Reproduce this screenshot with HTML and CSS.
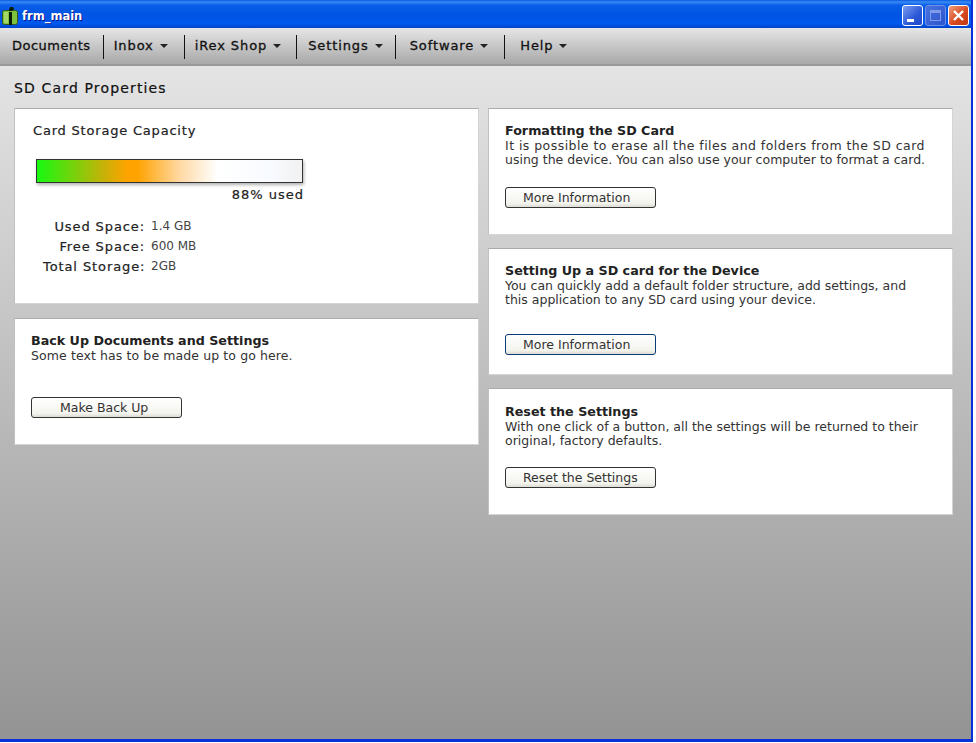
FILE: index.html
```html
<!DOCTYPE html>
<html lang="en">
<head>
    <meta charset="UTF-8">
    <title>frm_main</title>
    <link rel="stylesheet" href="styles.css">
</head>
<body>
<div class="window">
    <div class="titlebar">
        <svg class="app-icon" width="16" height="18" viewBox="0 0 16 18">
            <rect x="0.5" y="3.5" width="15" height="14" rx="2" fill="#7fc23e" stroke="#33591a"/>
            <rect x="2" y="5" width="4" height="11" fill="#a4d867"/>
            <rect x="7" y="5" width="3" height="13" fill="#0c1a08"/>
            <path d="M7 3l1-3h3l1 2-2 2H7z" fill="#0c1a08"/>
        </svg>
        <span class="title">frm_main</span>
        <div class="controls">
            <button class="ctl ctl-min"><span class="glyph-min"></span></button>
            <button class="ctl ctl-max"><span class="glyph-max"></span></button>
            <button class="ctl ctl-close">
                <svg width="13" height="13" viewBox="0 0 13 13"><path d="M2 2l9 9M11 2l-9 9" stroke="#fff" stroke-width="2.4"/></svg>
            </button>
        </div>
    </div>
    <nav class="menubar">
        <a class="menu-item menu-documents">Documents</a>
        <a class="menu-item has-caret menu-inbox">Inbox</a>
        <a class="menu-item has-caret menu-shop">iRex Shop</a>
        <a class="menu-item has-caret menu-settings">Settings</a>
        <a class="menu-item has-caret menu-software">Software</a>
        <a class="menu-item has-caret menu-help">Help</a>
    </nav>
    <main class="content">
        <h1>SD Card Properties</h1>
        <div class="columns">
            <div class="column column-left">
                <section class="panel storage">
                    <h2 class="storage-title">Card Storage Capacity</h2>
                    <div class="meter"></div>
                    <div class="meter-label">88% used</div>
                    <dl class="stats">
                        <dt>Used Space:</dt><dd>1.4 GB</dd>
                        <dt>Free Space:</dt><dd>600 MB</dd>
                        <dt>Total Storage:</dt><dd>2GB</dd>
                    </dl>
                </section>
                <section class="panel backup">
                    <h2>Back Up Documents and Settings</h2>
                    <p>Some text has to be made up to go here.</p>
                    <button class="btn">Make Back Up</button>
                </section>
            </div>
            <div class="column column-right">
                <section class="panel info">
                    <h2>Formatting the SD Card</h2>
                    <p><span class="wide">It is possible to erase all the files and folders from the SD card</span><br>using the device. You can also use your computer to format a card.</p>
                    <button class="btn">More Information</button>
                </section>
                <section class="panel info">
                    <h2>Setting Up a SD card for the Device</h2>
                    <p>You can quickly add a default folder structure, add settings, and<br>this application to any SD card using your device.</p>
                    <button class="btn btn-focus">More Information</button>
                </section>
                <section class="panel info reset">
                    <h2>Reset the Settings</h2>
                    <p>With one click of a button, all the settings will be returned to their<br>original, factory defaults.</p>
                    <button class="btn">Reset the Settings</button>
                </section>
            </div>
        </div>
    </main>
</div>
</body>
</html>
```

FILE: styles.css
```css
html, body {
    margin: 0;
    background: #fff;
}
body {
    font-family: "DejaVu Sans", Verdana, sans-serif;
    font-size: 12px;
    color: #222;
}
.window {
    width: 973px;
    height: 742px;
    box-sizing: border-box;
    display: flex;
    flex-direction: column;
    border-right: 2px solid #0831d9;
    border-bottom: 3px solid #0831d9;
}
.titlebar {
    height: 28px;
    flex: none;
    box-sizing: border-box;
    display: flex;
    align-items: center;
    padding: 3px 2px 0 2px;
    background: linear-gradient(#0a5ae0 0, #3a8cf5 2px, #0a5fe8 5px, #0054e3 14px, #0058ee 24px, #0043c8 28px);
}
.app-icon {
    flex: none;
}
.title {
    margin-left: 4px;
    color: #fff;
    font-size: 11.5px;
    font-weight: bold;
    text-shadow: 1px 1px 0 #0f1089;
}
.controls {
    margin-left: auto;
    display: flex;
    gap: 2px;
}
.ctl {
    width: 21px;
    height: 21px;
    padding: 0;
    box-sizing: border-box;
    border: 1px solid #fff;
    border-radius: 3px;
    display: flex;
    align-items: center;
    justify-content: center;
    position: relative;
}
.ctl-min {
    background: linear-gradient(135deg, #7a9cf0, #2c58d8 60%, #2048c8);
}
.ctl-max {
    background: linear-gradient(135deg, #4a72e0, #2a55cc);
    border-color: #6f90e8;
}
.ctl-close {
    background: linear-gradient(135deg, #f0a080, #d84a20 55%, #c03810);
}
.glyph-min {
    position: absolute;
    left: 4px;
    bottom: 3px;
    width: 7px;
    height: 3px;
    background: #fff;
}
.glyph-max {
    width: 11px;
    height: 11px;
    box-sizing: border-box;
    border: 1px solid #7f9bea;
    border-top-width: 3px;
}
.menubar {
    height: 38px;
    flex: none;
    box-sizing: border-box;
    display: flex;
    align-items: center;
    padding-top: 1px;
    background: linear-gradient(#e6e6e6, #a8a8a8);
    border-bottom: 2px solid #999;
}
.menu-item {
    height: 24px;
    line-height: 22px;
    font-size: 13px;
    color: #111;
    border-left: 1px solid #111;
    letter-spacing: 0.9px;
    -webkit-text-stroke: 0.3px #111;
}
.menu-documents {
    padding: 0 12px;
    border-left: 0;
    letter-spacing: 0.5px;
}
.menu-inbox {
    padding: 0 16px 0 10px;
}
.menu-shop {
    padding: 0 15px 0 10px;
}
.menu-settings {
    padding: 0 12px 0 11px;
}
.menu-software {
    padding: 0 16px 0 14px;
}
.menu-help {
    padding: 0 13px 0 15px;
}
.has-caret::after {
    content: "";
    display: inline-block;
    margin-left: 6px;
    vertical-align: 2px;
    border-left: 4.5px solid transparent;
    border-right: 4.5px solid transparent;
    border-top: 4px solid #222;
}
.content {
    flex: 1;
    padding: 1px 18px 0 14px;
    background: linear-gradient(#e4e4e4, #939393);
}
h1 {
    margin: 12px 0 11px 0;
    font-size: 14px;
    line-height: 18px;
    font-weight: normal;
    letter-spacing: 1.15px;
    color: #111;
    -webkit-text-stroke: 0.2px #111;
}
.columns {
    display: flex;
    gap: 9px;
    align-items: flex-start;
}
.column {
    width: 465px;
    display: flex;
    flex-direction: column;
}
.column-left {
    gap: 14px;
}
.column-right {
    gap: 13px;
}
.panel {
    box-sizing: border-box;
    background: #fff;
    border: 1px solid #d4d4d4;
    border-top-color: #aaa;
    border-left-color: #c0c0c0;
}
h2 {
    margin: 0;
    font-size: 12.7px;
    line-height: 16px;
    font-weight: bold;
    color: #222;
}
p {
    margin: 0;
    font-size: 12.5px;
    line-height: 14px;
    color: #333;
}
.wide {
    letter-spacing: 0.45px;
}
.storage {
    height: 196px;
    padding: 14px 18px;
}
.storage-title {
    font-size: 13px;
    line-height: 15px;
    font-weight: normal;
    letter-spacing: 0.8px;
    -webkit-text-stroke: 0.2px #222;
}
.meter {
    width: 267px;
    height: 24px;
    box-sizing: border-box;
    margin: 21px 0 0 3px;
    border: 1px solid #333;
    box-shadow: 1px 2px 3px rgba(0, 0, 0, 0.3);
    background: linear-gradient(90deg, #17f911 0, #c5b207 25%, #ffa300 34%, #ffa300 38%, #ffd9a4 54%, #fff 68%, #f8fbff 88%, #f1f1f1 100%);
}
.meter-label {
    width: 271px;
    margin-top: 4px;
    text-align: right;
    font-size: 13px;
    line-height: 16px;
    letter-spacing: 1px;
    -webkit-text-stroke: 0.2px #222;
}
.stats {
    margin: 16px 0 0 10px;
    display: grid;
    grid-template-columns: 102px auto;
    column-gap: 6px;
    row-gap: 5px;
    justify-content: start;
    line-height: 15px;
}
.stats dt {
    text-align: right;
    font-size: 13px;
    letter-spacing: 0.9px;
    white-space: nowrap;
    -webkit-text-stroke: 0.2px #222;
}
.stats dd {
    margin: 0;
    font-size: 12px;
    color: #444;
}
.backup {
    height: 127px;
    padding: 14px 16px;
}
.backup p {
    letter-spacing: 0.1px;
}
.backup .btn {
    margin-top: 34px;
    padding-left: 28px;
}
.info {
    height: 127px;
    padding: 14px 16px;
}
.info .btn {
    margin-top: 20px;
}
.info .btn-focus {
    margin-top: 27px;
}
.reset {
    padding-top: 15px;
}
.info.reset .btn {
    margin-top: 19px;
}
.btn {
    display: block;
    width: 151px;
    height: 21px;
    box-sizing: border-box;
    padding: 0 0 0 17px;
    text-align: left;
    font-family: inherit;
    font-size: 12.5px;
    color: #333;
    border: 1px solid #333;
    border-radius: 3px;
    background: linear-gradient(#fff, #f4f4ee 80%, #dcdcd4);
}
.btn-focus {
    border-color: #0a3c78;
}
```
